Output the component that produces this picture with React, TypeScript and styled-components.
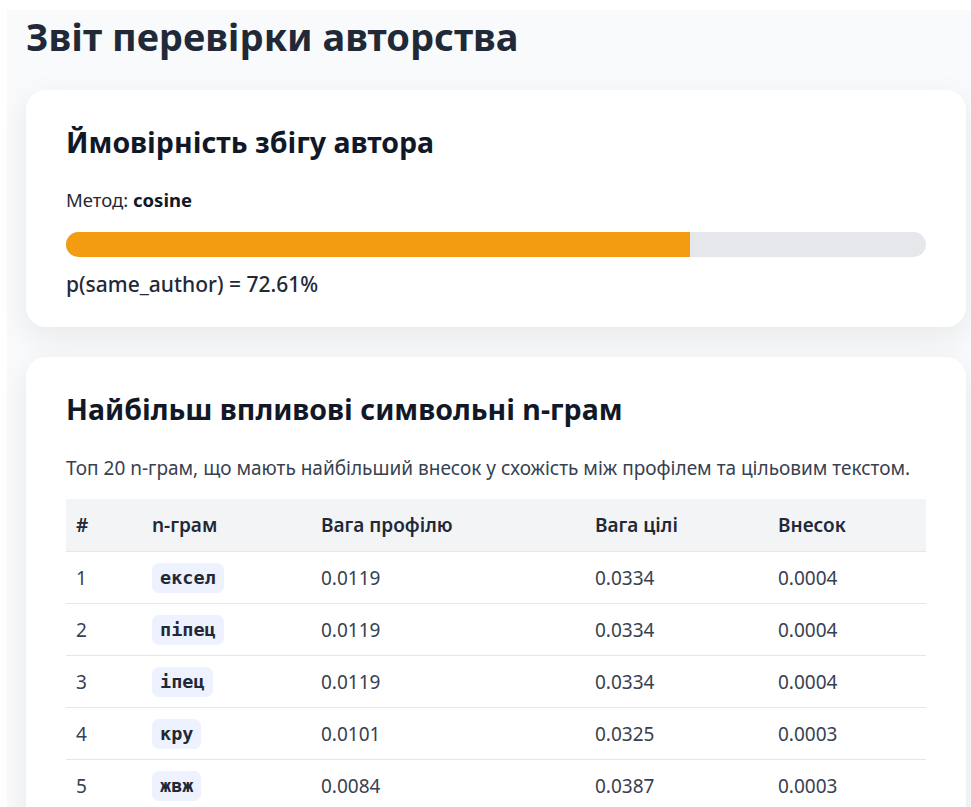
import styled, { createGlobalStyle } from "styled-components";

const GlobalStyle = createGlobalStyle`
  html, body {
    margin: 0;
    padding: 0;
    background: #ffffff;
    overflow: hidden;
  }
  body {
    padding: 10px 0 0 7px;
    font-family: "Noto Sans", "Open Sans", sans-serif;
    color: #1f2937;
  }
`;

type Row = {
  gram: string;
  profile: string;
  target: string;
  share: string;
};

const rows: Row[] = [
  { gram: "ексел", profile: "0.0119", target: "0.0334", share: "0.0004" },
  { gram: "піпец", profile: "0.0119", target: "0.0334", share: "0.0004" },
  { gram: "іпец", profile: "0.0119", target: "0.0334", share: "0.0004" },
  { gram: "кру", profile: "0.0101", target: "0.0325", share: "0.0003" },
  { gram: "жвж", profile: "0.0084", target: "0.0387", share: "0.0003" },
];

const probability = 72.61;

const App = () => {
  return (
    <>
      <GlobalStyle />
      <Page>
        <PageTitle>Звіт перевірки авторства</PageTitle>

        <Card>
          <CardTitle>Ймовірність збігу автора</CardTitle>
          <Method>
            Метод: <b>cosine</b>
          </Method>
          <Track>
            <Fill style={{ width: `${probability}%` }} />
          </Track>
          <Score>p(same_author) = {probability.toFixed(2)}%</Score>
        </Card>

        <Card>
          <CardTitle>Найбільш впливові символьні n-грам</CardTitle>
          <Note>
            Топ 20 n-грам, що мають найбільший внесок у схожість між профілем та
            цільовим текстом.
          </Note>
          <Table>
            <colgroup>
              <col style={{ width: 76 }} />
              <col style={{ width: 169 }} />
              <col style={{ width: 274 }} />
              <col style={{ width: 183 }} />
              <col />
            </colgroup>
            <thead>
              <tr>
                <Th>#</Th>
                <Th>n-грам</Th>
                <Th>Вага профілю</Th>
                <Th>Вага цілі</Th>
                <Th>Внесок</Th>
              </tr>
            </thead>
            <tbody>
              {rows.map((r, i) => (
                <tr key={r.gram}>
                  <Td>{i + 1}</Td>
                  <Td>
                    <Gram>{r.gram}</Gram>
                  </Td>
                  <Td>{r.profile}</Td>
                  <Td>{r.target}</Td>
                  <Td>{r.share}</Td>
                </tr>
              ))}
            </tbody>
          </Table>
        </Card>
      </Page>
    </>
  );
};

export default App;

const Page = styled.div`
  width: 1000px;
  min-height: 900px;
  background: #f9fafb;
  padding: 0 19px 40px;
  box-sizing: border-box;
`;

const PageTitle = styled.h1`
  margin: 0;
  padding: 4px 0 32px;
  font-size: 38px;
  line-height: 44px;
  font-weight: 700;
  color: #1f2937;
`;

const Card = styled.section`
  width: 940px;
  box-sizing: border-box;
  background: #ffffff;
  border-radius: 20px;
  padding: 34px 40px 29px;
  margin-bottom: 30px;
  box-shadow: 0 10px 32px rgba(15, 23, 42, 0.08);
`;

const CardTitle = styled.h2`
  margin: 0 0 26px;
  font-size: 28.5px;
  line-height: 36px;
  font-weight: 700;
  color: #111827;
`;

const Method = styled.div`
  font-size: 18.5px;
  line-height: 28px;
  color: #1f2937;
  margin-bottom: 18px;

  b {
    font-weight: 700;
    color: #111827;
  }
`;

const Track = styled.div`
  height: 25px;
  border-radius: 999px;
  background: #e5e7eb;
  overflow: hidden;
`;

const Fill = styled.div`
  height: 100%;
  background: #f39c12;
`;

const Score = styled.div`
  margin-top: 13px;
  font-size: 21px;
  line-height: 28px;
  font-weight: 500;
  color: #1f2937;
`;

const Note = styled.p`
  margin: 27px 0 17px;
  font-size: 19px;
  line-height: 28px;
  color: #374151;
`;

const Table = styled.table`
  width: 860px;
  border-collapse: collapse;
  table-layout: fixed;
  font-size: 19px;
  color: #1f2937;
`;

const Th = styled.th`
  text-align: left;
  font-weight: 600;
  background: #f3f4f6;
  height: 52px;
  padding: 0 10px;
  border-bottom: 1px solid #e5e7eb;
`;

const Td = styled.td`
  height: 51px;
  padding: 0 10px;
  border-bottom: 1px solid #e5e7eb;
  color: #374151;
`;

const Gram = styled.code`
  display: inline-block;
  font-family: "DejaVu Sans Mono", "Liberation Mono", monospace;
  font-size: 18.5px;
  font-weight: 700;
  line-height: 30px;
  padding: 0 8px;
  border-radius: 7px;
  background: #eef2ff;
  color: #1f2937;
`;
